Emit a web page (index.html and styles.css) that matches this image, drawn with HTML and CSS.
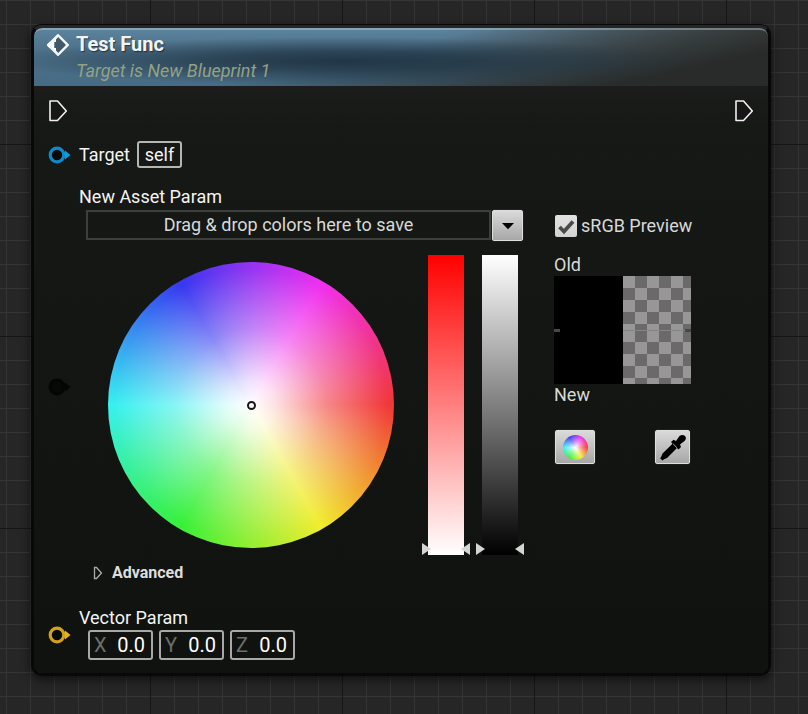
FILE: index.html
```html
<!DOCTYPE html>
<html lang="en">
<head>
<meta charset="utf-8">
<title>Test Func</title>
<link rel="stylesheet" href="styles.css">
</head>
<body>
<main class="graph">
  <section class="node">
    <header class="node-header">
      <svg class="event-icon" width="24" height="24" viewBox="0 0 24 24">
        <path d="M12 2 L22 12 L12 22 L2 12 Z" fill="#fff" stroke="#f2f5f6" stroke-width="2" stroke-linejoin="round"/>
        <path d="M12.2 4 L20 12 L12.2 20 L10 17.6 V15 H8.3 V9 H10 V6.4 Z" fill="#40586a"/>
        <path d="M1.5 12 L4 9.5 M1.5 12 L4 14.5" stroke="#fff" stroke-width="1.5"/>
      </svg>
      <div class="titles">
        <h1><span class="t-title">Test Func</span></h1>
        <p><span class="t-sub">Target is New Blueprint 1</span></p>
      </div>
    </header>
    <div class="exec-row">
      <svg width="20" height="24" viewBox="0 0 20 24"><path d="M2 2 H9.5 L18.3 12 L9.5 21.5 H2 Z" fill="#161616" stroke="#f0f0f0" stroke-width="1.6" stroke-linejoin="round"/></svg>
      <svg width="20" height="24" viewBox="0 0 20 24"><path d="M2 2 H9.5 L18.3 12 L9.5 21.5 H2 Z" fill="#161616" stroke="#f0f0f0" stroke-width="1.6" stroke-linejoin="round"/></svg>
    </div>
    <div class="row target-row">
      <svg class="pin pin-blue" width="24" height="18" viewBox="0 0 24 18"><circle cx="9" cy="9" r="6.8"/><path d="M17 4.5 L22.5 9 L17 13.5 Z"/></svg>
      <span class="label t-target">Target</span>
      <span class="self"><span class="t-self">self</span></span>
    </div>
    <div class="row asset-row">
      <svg class="pin pin-black" width="24" height="18" viewBox="0 0 24 18"><circle cx="9" cy="9" r="6.8"/><path d="M17 4.5 L22.5 9 L17 13.5 Z"/></svg>
      <div class="asset">
        <div class="label"><span class="t-asset">New Asset Param</span></div>
        <div class="picker">
          <div class="picker-main">
            <div class="theme-bar">
              <div class="drop-zone"><span class="t-drag">Drag &amp; drop colors here to save</span></div>
              <button class="btn combo"><svg width="14" height="8" viewBox="0 0 14 8"><path d="M1 1 H13 L7 7.2 Z"/></svg></button>
            </div>
            <div class="color-area">
              <div class="wheel"><i class="wheel-dot"></i></div>
              <div class="slider saturation"><i class="thumb"></i></div>
              <div class="slider value"><i class="thumb"></i></div>
            </div>
            <div class="advanced">
              <svg width="10" height="14" viewBox="0 0 10 14"><path d="M1.5 1.5 H3.5 L8.5 7 L3.5 12.5 H1.5 Z" fill="none" stroke="#aaa" stroke-width="1.3"/></svg>
              <span class="t-adv">Advanced</span>
            </div>
          </div>
          <div class="picker-side">
            <div class="srgb">
              <span class="check"><svg width="22" height="22" viewBox="0 0 22 22"><path d="M4.5 12 L9 16.5 L18 6.5" fill="none" stroke="#4a4a4a" stroke-width="3.8"/></svg></span>
              <span class="t-srgb">sRGB Preview</span>
            </div>
            <div class="side-label old"><span class="t-old">Old</span></div>
            <div class="preview">
              <div class="solid"></div><div class="alpha"></div>
              <div class="solid"></div><div class="alpha lower"></div>
            </div>
            <div class="side-label"><span class="t-new">New</span></div>
            <div class="tools">
              <button class="btn wheel-btn"><i class="mini-wheel"></i></button>
              <button class="btn dropper-btn"><svg width="28" height="28" viewBox="0 0 28 28"><path d="M12 9 L14.5 6.8 L17 8 L20.5 3 Q23.5 .8 26 3 Q28 5.500 25.500 8 L21 11.500 L22 14 L19.500 16.500 L18 15 L8 25 L5 26.200 L3.500 27.500 L1.200 25.500 L2.300 23.500 L3.500 20.500 L13.500 10.800 Z"/><path d="M14.200 11 L18 14.800" stroke="#aaa" stroke-width="1"/></svg></button>
            </div>
          </div>
        </div>
      </div>
    </div>
    <div class="row vector-row">
      <svg class="pin pin-gold" width="24" height="18" viewBox="0 0 24 18"><circle cx="9" cy="9" r="6.800"/><path d="M17 4.500 L22.500 9 L17 13.500 Z"/></svg>
      <div class="vector">
        <div class="label"><span class="t-vec">Vector Param</span></div>
        <div class="fields">
          <div class="field"><span>X</span><b>0.0</b></div>
          <div class="field"><span>Y</span><b>0.0</b></div>
          <div class="field"><span>Z</span><b>0.0</b></div>
        </div>
      </div>
    </div>
  </section>
</main>
</body>
</html>
```
FILE: styles.css
```css
* { box-sizing: border-box; }
body { margin: 0; font: 18px/22px Roboto, sans-serif; color: #f4f4f4; }
h1, p { margin: 0; }
button { padding: 0; margin: 0; }
svg { display: block; flex: none; }
i { display: block; }

.graph {
  width: 808px;
  height: 714px;
  padding: 25px 37px 0 31px;
  overflow: hidden;
  background:
    linear-gradient(90deg, #161616 1px, transparent 1px) 150px 0 / 192px 192px,
    linear-gradient(#161616 1px, transparent 1px) 0 144px / 192px 192px,
    linear-gradient(90deg, #353535 1px, transparent 1px) 6px 0 / 24px 24px,
    linear-gradient(#353535 1px, transparent 1px) 0 0 / 24px 24px,
    #262626;
}
.node {
  height: 651px;
  border: 3px solid #070807;
  border-top-color: #242628;
  border-radius: 11px;
  overflow: hidden;
  background: linear-gradient(rgba(27,28,27,.96) 58px, rgba(21,24,20,.96) 100px, rgba(14,17,13,.96)) padding-box;
  box-shadow: 0 -1px 0 #080808, 0 3px 10px 1px rgba(0,0,0,.55);
}
.node-header {
  display: flex;
  height: 58px;
  padding: 5px 0 0 12px;
  border-top: 2px solid rgba(200,210,215,.42);
  border-radius: 8px 8px 0 0;
  background:
    radial-gradient(ellipse 340px 24px at 310px 33px, rgba(31,51,66,.95), rgba(31,51,66,.72) 38%, transparent),
    linear-gradient(168deg, transparent 45%, rgba(38,40,38,.55) 68%, rgba(36,38,36,.9) 84%),
    linear-gradient(90deg, transparent 55%, rgba(80,84,84,.9)),
    linear-gradient(#5c849e, #4d7189 40%, #466b84);
  background-origin: border-box;
}
.titles { margin-left: 6px; }
h1 { font-size: 20px; line-height: 24px; font-weight: 700; color: #f3f3f3; text-shadow: 1px 1px 1px rgba(0,0,0,.5); margin-top: -3px; }
.titles p { font-style: italic; color: #95a184; line-height: 24px; margin-top: 3px; }
.event-icon { margin-top: -2px; }

.exec-row { display: flex; justify-content: space-between; align-items: center; height: 50px; padding: 0 14px; }
.row { display: flex; align-items: center; padding-left: 14px; }
.pin { margin-right: 7px; fill: #070907; stroke-width: 3.2; }
.pin path { stroke: none; }
.pin-blue { stroke: #0d8bc9; } .pin-blue path { fill: #0d9be0; }
.pin-black { stroke: #040504; } .pin-black path { fill: #040504; }
.pin-gold { stroke: #d2a11c; } .pin-gold path { fill: #e6b322; }
.target-row { height: 38px; }
.self { display: flex; align-items: center; justify-content: center; width: 45px; height: 27px; margin-left: 7px; border: 2px solid #b5b5b3; border-radius: 3px; }
.label { height: 22px; white-space: nowrap; }
.target-row .self { margin-top: -1px; }

.asset-row { height: 402px; margin-top: 12px; align-items: center; }
.asset { height: 402px; }
.picker { display: flex; gap: 30px; padding: 2px 0 0 7px; color: #d9d9d9; }
.picker-main { width: 438px; }
.theme-bar { display: flex; gap: 1px; height: 31px; }
.drop-zone { display: flex; align-items: center; justify-content: center; width: 405px; height: 30px; border: 2px solid #3d3f3c; }
.btn { display: flex; align-items: center; justify-content: center; border: 1px solid #dedede; border-radius: 2px; background: linear-gradient(#dadada, #a7a7a7); box-shadow: 0 0 1px #777; }
.combo { width: 31px; height: 31px; }
.color-area { display: flex; height: 300px; margin-top: 14px; }
.wheel {
  display: flex; align-items: center; justify-content: center;
  width: 286px; height: 286px; margin: 7px 34px 0 22px; border-radius: 50%;
  background:
    radial-gradient(closest-side, #fff, rgba(255,255,255,.85) 17%, rgba(255,255,255,.4) 53%, transparent 96%),
    conic-gradient(from 90deg, #f03838, #f0ed30 60deg, #38f038 120deg, #38f0f0 180deg, #3838f0 240deg, #f030f0 300deg, #f03838);
}
.wheel-dot { width: 9px; height: 9px; border: 2px solid #161616; border-radius: 50%; }
.slider { position: relative; width: 36px; height: 300px; }
.saturation { background: linear-gradient(#f00, #fff); margin-right: 18px; }
.value { background: linear-gradient(#fff, #000); }
.thumb::before, .thumb::after {
  content: ""; position: absolute; top: 288px; width: 9px; height: 12px; background: #d5d5d5;
}
.thumb::before { left: -6px; clip-path: polygon(0 0, 100% 50%, 0 100%); }
.thumb::after { right: -6px; clip-path: polygon(100% 0, 0 50%, 100% 100%); }
.advanced { display: flex; align-items: center; gap: 9px; height: 22px; margin-top: 7px; padding-left: 7px; font-size: 16px; font-weight: 700; color: #dedede; }

.picker-side { width: 137px; }
.srgb { display: flex; align-items: center; height: 31px; padding-left: 1px; white-space: nowrap; }
.check { width: 22px; height: 22px; margin-right: 4px; border-radius: 2px; background: linear-gradient(#e2e2e2, #d2d2d2); flex: none; }
.side-label { height: 22px; }
.old { margin-top: 13px; }
.preview { position: relative; display: grid; grid-template: 54px 54px / 69px 68px; }
.solid { background: #000; }
.alpha { background: repeating-conic-gradient(#6b696a 0 25%, #979797 0 50%) 0 0 / 24px 24px; }
.lower { border-top: 1px solid #858585; background-origin: border-box; }
.preview::before, .preview::after { content: ""; position: absolute; top: 53px; width: 6px; height: 3px; background: #474747; }
.preview::before { left: 0; }
.preview::after { right: 0; }
.tools { display: flex; justify-content: space-between; margin: 24px 1px 0; }
.tools .btn { height: 34px; }
.wheel-btn { width: 40px; }
.dropper-btn { width: 35px; }
.mini-wheel {
  width: 25px; height: 25px; border-radius: 50%;
  background:
    radial-gradient(closest-side, #fff, rgba(255,255,255,.4) 53%, transparent),
    conic-gradient(from 90deg, #f03838, #f0ed30 60deg, #38f038 120deg, #38f0f0 180deg, #3838f0 240deg, #f030f0 300deg, #f03838);
}

.vector-row { margin-top: 19px; height: 55px; }
.vector { height: 55px; }
.fields { display: flex; gap: 6px; padding: 1px 0 0 9px; }
.field { display: flex; align-items: center; justify-content: space-between; width: 65px; height: 30px; padding: 0 6px 0 4px; border: 2px solid #a8a8a6; border-radius: 3px; font-size: 20px; }
.field span { color: #6d6f6c; }
.field b { font-weight: 400; color: #fff; }
```
